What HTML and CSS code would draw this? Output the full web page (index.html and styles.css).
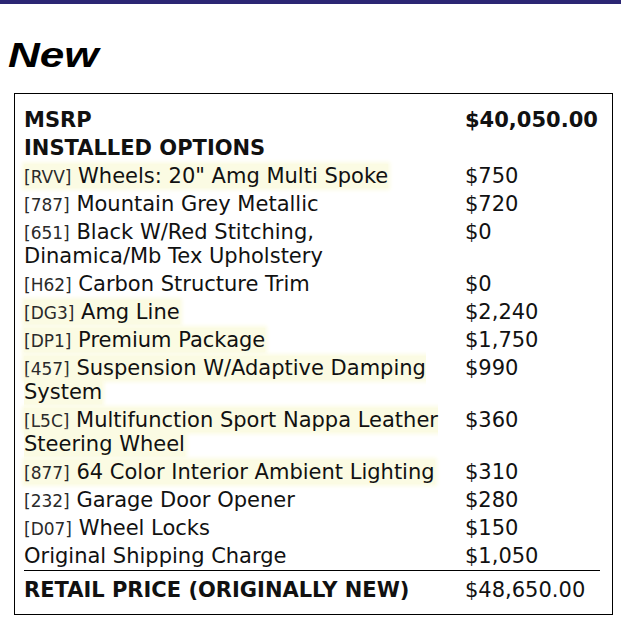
FILE: index.html
```html
<!DOCTYPE html>
<html>
<head>
<meta charset="utf-8">
<link rel="stylesheet" href="styles.css">
</head>
<body>
<div class="topbar"></div>
<h1 class="title">New</h1>
<div class="box">
<table class="sticker">
<tr class="head"><td class="desc">MSRP</td><td class="price">$40,050.00</td></tr>
<tr class="head"><td class="desc">INSTALLED OPTIONS</td><td class="price"></td></tr>
<tr><td class="desc"><span class="hl"><span class="code">[RVV]</span> Wheels: 20" Amg Multi Spoke</span></td><td class="price">$750</td></tr>
<tr><td class="desc"><span class="code">[787]</span> Mountain Grey Metallic</td><td class="price">$720</td></tr>
<tr><td class="desc"><span class="code">[651]</span> Black W/Red Stitching, Dinamica/Mb Tex Upholstery</td><td class="price">$0</td></tr>
<tr><td class="desc"><span class="code">[H62]</span> Carbon Structure Trim</td><td class="price">$0</td></tr>
<tr><td class="desc"><span class="hl"><span class="code">[DG3]</span> Amg Line</span></td><td class="price">$2,240</td></tr>
<tr><td class="desc"><span class="hl"><span class="code">[DP1]</span> Premium Package</span></td><td class="price">$1,750</td></tr>
<tr><td class="desc"><span class="hl"><span class="code">[457]</span> Suspension W/Adaptive Damping System</span></td><td class="price">$990</td></tr>
<tr><td class="desc"><span class="hl"><span class="code">[L5C]</span> Multifunction Sport Nappa Leather Steering Wheel</span></td><td class="price">$360</td></tr>
<tr><td class="desc"><span class="hl"><span class="code">[877]</span> 64 Color Interior Ambient Lighting</span></td><td class="price">$310</td></tr>
<tr><td class="desc"><span class="code">[232]</span> Garage Door Opener</td><td class="price">$280</td></tr>
<tr><td class="desc"><span class="code">[D07]</span> Wheel Locks</td><td class="price">$150</td></tr>
<tr><td class="desc">Original Shipping Charge</td><td class="price">$1,050</td></tr>
<tr class="total"><td class="desc">RETAIL PRICE (ORIGINALLY NEW)</td><td class="price">$48,650.00</td></tr>
</table>
</div>
</body>
</html>
```
FILE: styles.css
```css
html, body {
  margin: 0;
  padding: 0;
  background: #ffffff;
}
body {
  font-family: "DejaVu Sans", sans-serif;
  color: #111111;
}
.topbar {
  height: 4px;
  background: #2b2673;
}
.title {
  width: max-content;
  margin: 31px 0 18px 8px;
  font-family: "Liberation Sans", Arial, sans-serif;
  font-style: italic;
  font-weight: bold;
  font-size: 35px;
  line-height: 40px;
  color: #000;
  transform: scaleX(1.26);
  transform-origin: left center;
}
.box {
  margin: 0 8px 0 14px;
  border: 1px solid #000;
  padding: 12px 12px 10px 9px;
}
.sticker {
  border-collapse: collapse;
  width: 100%;
  font-size: 21px;
  line-height: 24px;
}
.sticker td {
  padding: 2px 0;
  vertical-align: top;
}
.sticker td.desc {
  box-sizing: border-box;
  width: 441px;
  padding-right: 12px;
}
.price {
  white-space: nowrap;
}
.head td {
  font-weight: bold;
}
.code {
  font-size: 17px;
  line-height: 1;
  color: #2a2a2a;
}
.hl {
  background: #fbfbe3;
  box-shadow: 0 0 4px 2px #fbfbe3;
}
.sticker .total td {
  border-top: 1px solid #000;
  padding-top: 7px;
}
.total .desc {
  font-weight: bold;
}
```
